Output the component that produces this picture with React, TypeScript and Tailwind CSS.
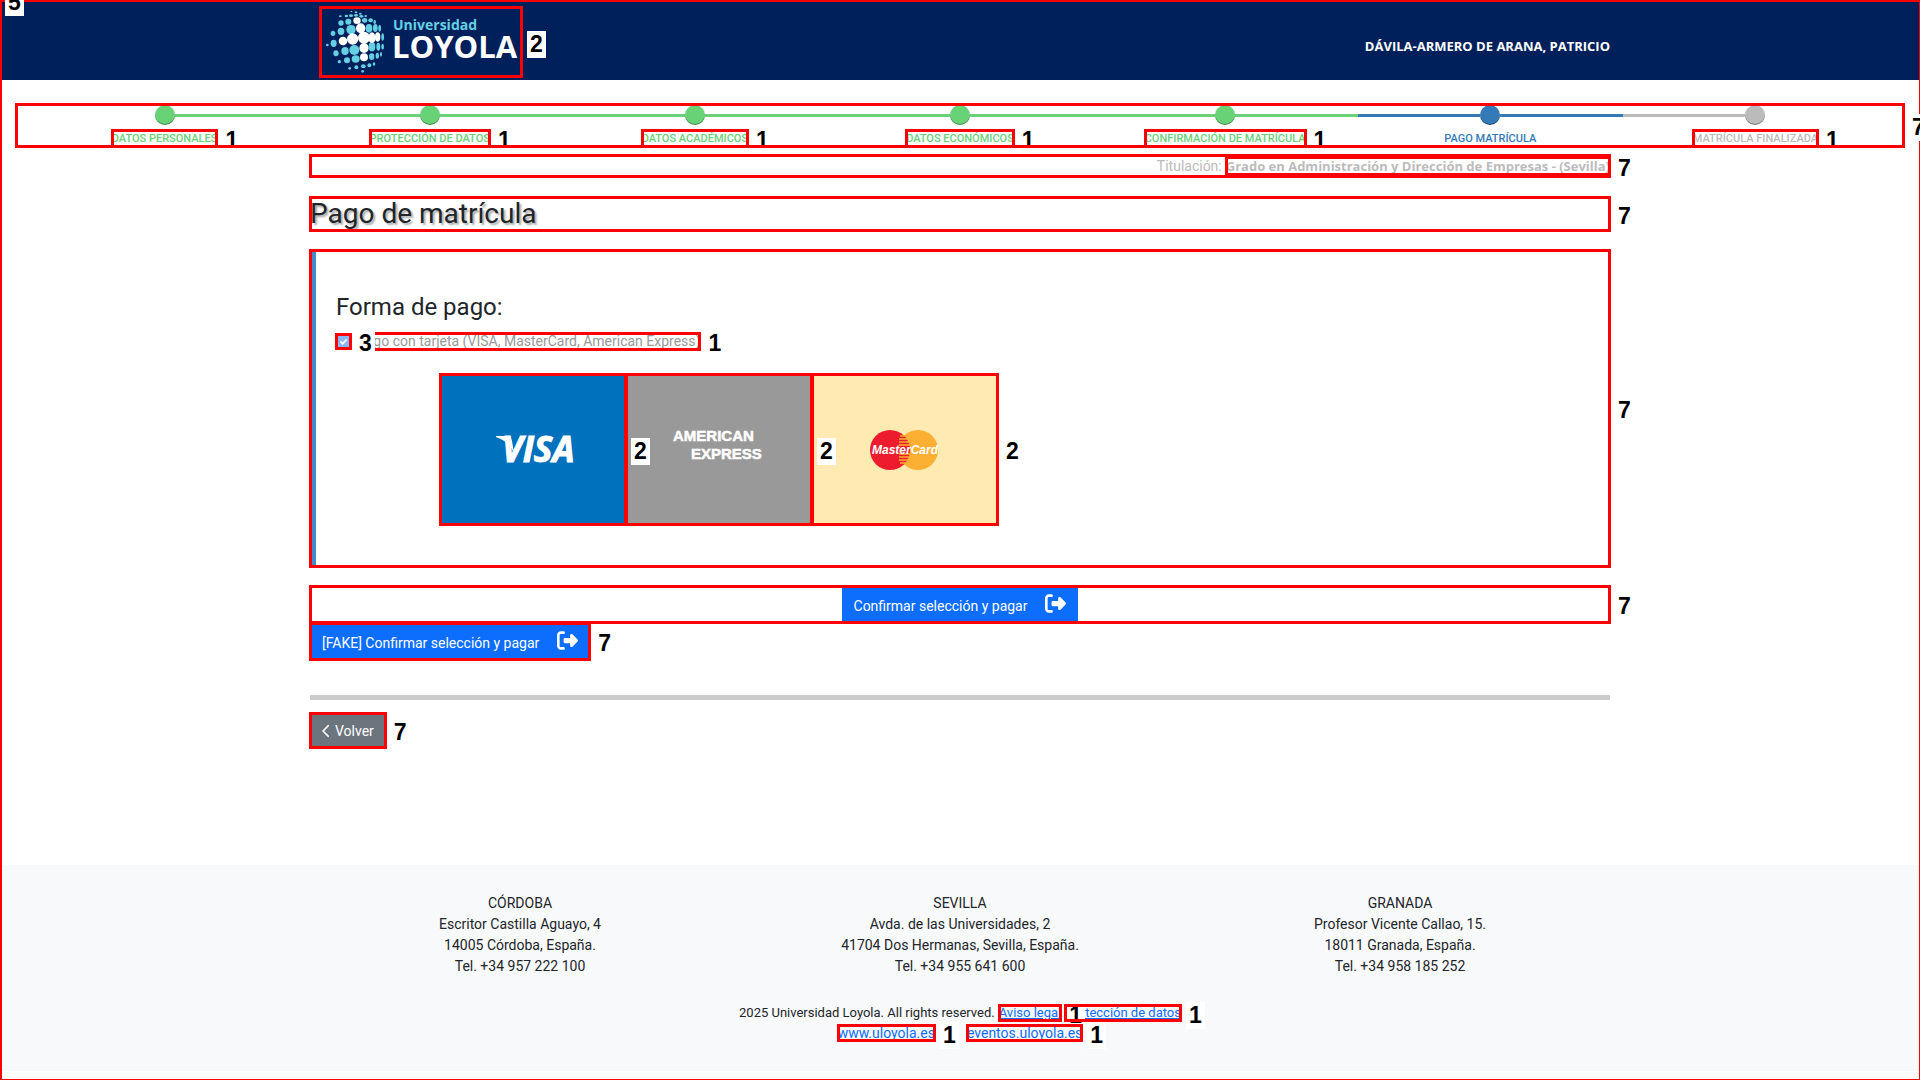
import type { ReactNode } from "react";
import { FaChevronLeft, FaRightFromBracket } from "react-icons/fa6";

type MarkProps = {
  n?: number;
  children: ReactNode;
  className?: string;
  labelClass?: string;
};

function Tag({ n }: { n: number }) {
  return (
    <span className="bg-white px-[3px] font-['Liberation_Sans',sans-serif] text-[23px] leading-[27px] font-bold text-black">
      {n}
    </span>
  );
}

/** Outlines its content in red and puts a numbered tag to the right of it. */
function Mark({ n, children, className = "", labelClass = "z-10" }: MarkProps) {
  return (
    <div className={`relative ${className}`}>
      {children}
      <span className="pointer-events-none absolute -inset-px z-10 border-3 border-[#ff0000]" />
      {n !== undefined && (
        <span className={`pointer-events-none absolute inset-y-0 left-full ml-[5px] flex items-center pt-1 ${labelClass}`}>
          <Tag n={n} />
        </span>
      )}
    </div>
  );
}

const tealDots = [
  [88, 16, 3, 2], [102, 19, 4, 3], [115, 23, 4, 3], [55, 31, 4, 3], [73, 30, 5, 4], [87, 29, 6, 4],
  [102, 28, 6, 4], [118, 31, 6, 4], [131, 30, 4, 3], [57, 51, 8, 8], [79, 47, 9, 9], [128, 43, 8, 7],
  [146, 43, 7, 6], [158, 48, 4, 6], [33, 82, 7, 8], [57, 76, 10, 11], [87, 71, 14, 14], [141, 67, 10, 13],
  [160, 66, 7, 12], [173, 67, 4, 10], [16, 117, 4, 4], [35, 112, 9, 11], [182, 93, 4, 11], [42, 142, 8, 9],
  [69, 135, 11, 12], [97, 132, 15, 15], [150, 122, 10, 14], [169, 122, 6, 12], [182, 122, 4, 9],
  [52, 167, 5, 5], [75, 163, 9, 9], [101, 159, 12, 11], [149, 152, 8, 10], [166, 149, 5, 9], [177, 145, 3, 7],
  [83, 187, 4, 4], [103, 184, 6, 6], [124, 181, 7, 6], [142, 178, 6, 6], [156, 174, 4, 5], [122, 196, 4, 4],
];

const whiteDots = [
  [105, 44, 11, 10], [116, 67, 14, 15], [92, 99, 17, 17], [126, 95, 18, 18], [63, 105, 13, 13],
  [150, 95, 11, 16], [167, 93, 8, 14], [126, 126, 14, 15], [126, 154, 12, 12],
];

function Logo() {
  return (
    <svg viewBox="0 0 202 70" className="block h-[70px] w-[202px]" role="img" aria-label="Universidad Loyola">
      <g transform="translate(2 -1) scale(0.3333)">
        {tealDots.map(([x, y, rx, ry]) => (
          <ellipse key={`${x}-${y}`} cx={x} cy={y} rx={rx} ry={ry} fill="#65d0e3" />
        ))}
        {whiteDots.map(([x, y, rx, ry]) => (
          <ellipse key={`${x}-${y}`} cx={x} cy={y} rx={rx} ry={ry} fill="#fff" />
        ))}
      </g>
      <text x="73" y="23" fill="#65d0e3" fontFamily="Open Sans, sans-serif" fontSize="14" fontWeight="700">
        Universidad
      </text>
      <text x="72" y="51" fill="#fff" fontFamily="Open Sans, sans-serif" fontSize="31" fontWeight="700">
        LOYOLA
      </text>
    </svg>
  );
}

const steps = [
  { label: "DATOS PERSONALES", state: "done" },
  { label: "PROTECCIÓN DE DATOS", state: "done" },
  { label: "DATOS ACADÉMICOS", state: "done" },
  { label: "DATOS ECONÓMICOS", state: "done" },
  { label: "CONFIRMACIÓN DE MATRÍCULA", state: "done" },
  { label: "PAGO MATRÍCULA", state: "current" },
  { label: "MATRÍCULA FINALIZADA", state: "pending" },
] as const;

const fills = { done: "bg-[#68d277]", current: "bg-[#337ab7]", pending: "bg-[#bbbbbb]" };
const inks = { done: "text-[#68d277]", current: "text-[#337ab7]", pending: "text-[#bbbbbb]" };

function Steps() {
  return (
    <Mark n={7} className="mx-4 mt-6">
      <ol className="grid grid-cols-7 px-4 pt-px">
        {steps.map(({ label, state }, i) => (
          <li key={label} className="flex flex-col items-center">
            <div className="flex w-full items-center">
              <span className={`h-[3px] flex-1 ${i === 0 ? "" : fills[state]}`} />
              <span className={`size-5 rounded-full shadow-[inset_0_-1px_0_rgba(0,0,0,0.35)] ${fills[state]}`} />
              <span className={`h-[3px] flex-1 ${i === steps.length - 1 ? "" : fills[state]}`} />
            </div>
            <div className={`mt-[5px] text-[11px] leading-[17px] font-medium whitespace-nowrap ${inks[state]}`}>
              {state === "current" ? <span>{label}</span> : <Mark n={1}>{label}</Mark>}
            </div>
          </li>
        ))}
      </ol>
    </Mark>
  );
}

function Visa() {
  return (
    <svg viewBox="0 0 186 151" className="block h-[151px] w-[186px] bg-[#0071bc]" role="img" aria-label="VISA">
      <path d="M56 62h10q5 0 6 5l2 12q-4-11-18-16z" fill="#fff" />
      <text x="62" y="88" fill="#fff" fontFamily="Open Sans, sans-serif" fontSize="35" fontWeight="700" fontStyle="italic" stroke="#fff" strokeWidth="1">
        VISA
      </text>
    </svg>
  );
}

function Amex() {
  return (
    <svg
      viewBox="0 0 186 151"
      className="block h-[151px] w-[186px] bg-[#999999]"
      role="img"
      aria-label="American Express"
    >
      <g fill="#fff" fontFamily="Liberation Sans, sans-serif" fontSize="15" fontWeight="700" stroke="#fff" strokeWidth="0.5">
        <text x="47" y="67">AMERICAN</text>
        <text x="65" y="85">EXPRESS</text>
      </g>
    </svg>
  );
}

function MasterCard() {
  return (
    <svg viewBox="0 0 186 151" className="block h-[151px] w-[186px] bg-[#ffeab2]" role="img" aria-label="MasterCard">
      <circle cx="106" cy="76" r="20" fill="#fbb034" />
      <circle cx="78" cy="76" r="20" fill="#ed1b2e" />
      <path
        d="M88 62h9M87 65h10M87 68h11M87 71h11M87 80h11M87 83h11M87 86h10M88 89h8"
        stroke="#fbb034"
        strokeWidth="1.3"
      />
      <text
        x="60"
        y="80"
        fill="#fff"
        fontFamily="Liberation Sans, sans-serif"
        fontSize="12"
        fontWeight="700"
        fontStyle="italic"
      >
        MasterCard
      </text>
    </svg>
  );
}

const campuses = [
  ["CÓRDOBA", "Escritor Castilla Aguayo, 4", "14005 Córdoba, España.", "Tel. +34 957 222 100"],
  ["SEVILLA", "Avda. de las Universidades, 2", "41704 Dos Hermanas, Sevilla, España.", "Tel. +34 955 641 600"],
  ["GRANADA", "Profesor Vicente Callao, 15.", "18011 Granada, España.", "Tel. +34 958 185 252"],
];

function PayButton({ children }: { children: ReactNode }) {
  return (
    <button
      type="button"
      className="flex h-[37px] items-center gap-[18px] rounded-xs bg-[#0d6efd] px-3 pt-0.5 text-sm text-white"
    >
      {children}
      <FaRightFromBracket className="mb-1 text-[21px]" />
    </button>
  );
}

function FooterLink({ href, children }: { href: string; children: ReactNode }) {
  return (
    <Mark n={1} className="inline-block">
      <a href={href} className="block leading-4 text-[#0d6efd] underline">
        {children}
      </a>
    </Mark>
  );
}

export default function App() {
  return (
    <div className="relative flex min-h-screen flex-col overflow-hidden bg-white font-[Roboto,sans-serif] text-sm text-[#212529]">
      <header className="bg-[#00205b]">
        <div className="mx-auto flex h-20 max-w-[1320px] items-center justify-between px-[10px]">
          <div className="pt-1 pl-[10px]">
            <Mark n={2}>
              <Logo />
            </Mark>
          </div>
          <span className="pt-3 font-['Open_Sans',sans-serif] text-[13px] font-bold text-white">
            DÁVILA-ARMERO DE ARANA, PATRICIO
          </span>
        </div>
      </header>

      <Steps />

      <main className="mx-auto w-full max-w-[1320px] px-[10px] pb-10">
        <Mark n={7} className="mt-2">
          <p className="flex h-[22px] items-center justify-end gap-1 text-[#bbbbbb]">
            Titulación:
            <Mark n={7} className="font-['Open_Sans',sans-serif] text-[13px] leading-[18px] font-bold">
              Grado en Administración y Dirección de Empresas - (Sevilla)
            </Mark>
          </p>
        </Mark>

        <Mark n={7} className="mt-5">
          <h1 className="text-[28px] leading-[34px] [text-shadow:2px_2px_2px_#aaaaaa]">Pago de matrícula</h1>
        </Mark>

        <Mark n={7} className="mt-[19px]">
          <section className="border-l-[6px] border-[#428bca] pt-[41px] pb-[42px] pl-5">
            <h2 className="text-2xl leading-8">Forma de pago:</h2>
            <div className="mt-2 flex h-5 items-center gap-1.5 text-[#999999]">
              <Mark n={3} labelClass="z-20">
                <span className="grid size-[15px] place-items-center">
                  <input
                    id="card"
                    type="checkbox"
                    checked
                    readOnly
                    className="col-start-1 row-start-1 size-[13px] appearance-none rounded-xs bg-[#86b6fe]"
                  />
                  <svg viewBox="0 0 13 13" className="pointer-events-none col-start-1 row-start-1 size-[13px]">
                    <path d="M3.5 6.5l2.2 2.2 4-4.2" fill="none" stroke="#fff" strokeWidth="1.8" />
                  </svg>
                </span>
              </Mark>
              <Mark n={1}>
                <label htmlFor="card" className="block leading-[17px]">
                  Pago con tarjeta (VISA, MasterCard, American Express)
                </label>
              </Mark>
            </div>
            <div className="mt-[23px] flex pl-[104px]">
              <Mark n={2}>
                <Visa />
              </Mark>
              <Mark n={2}>
                <Amex />
              </Mark>
              <Mark n={2}>
                <MasterCard />
              </Mark>
            </div>
          </section>
        </Mark>

        <Mark n={7} className="mt-[19px] flex justify-center">
          <PayButton>Confirmar selección y pagar</PayButton>
        </Mark>
        <Mark n={7} className="w-fit">
          <PayButton>[FAKE] Confirmar selección y pagar</PayButton>
        </Mark>

        <hr className="mt-[35px] h-[5px] border-0 bg-[#cccccc]" />

        <Mark n={7} className="mt-[13px] w-fit">
          <button type="button" className="flex h-[35px] items-center gap-1 bg-[#6c757d] px-3 text-sm text-white">
            <FaChevronLeft className="w-[9px] text-sm" />
            Volver
          </button>
        </Mark>
      </main>

      <footer className="mt-auto mb-[9px] bg-[#f8f9fb] pt-7 pb-7 text-center">
        <div className="mx-auto grid max-w-[1320px] grid-cols-3">
          {campuses.map((lines) => (
            <address key={lines[0]} className="leading-[21px] not-italic">
              {lines.map((line) => (
                <div key={line}>{line}</div>
              ))}
            </address>
          ))}
        </div>
        <div className="mt-[26px] flex h-5 items-center justify-center gap-1 text-[13px]">
          <span>2025 Universidad Loyola. All rights reserved.</span>
          <FooterLink href="#aviso-legal">Aviso legal</FooterLink>
          <FooterLink href="#proteccion-de-datos">Protección de datos</FooterLink>
        </div>
        <div className="flex h-5 items-center justify-center gap-8">
          <FooterLink href="#uloyola">www.uloyola.es</FooterLink>
          <FooterLink href="#eventos">eventos.uloyola.es</FooterLink>
        </div>
      </footer>

      <span className="pointer-events-none absolute inset-0 border-t-2 border-r border-b border-l-2 border-[#ff0000]" />
      <span className="absolute -top-[11px] left-[5px] z-10 flex">
        <Tag n={5} />
      </span>
    </div>
  );
}
